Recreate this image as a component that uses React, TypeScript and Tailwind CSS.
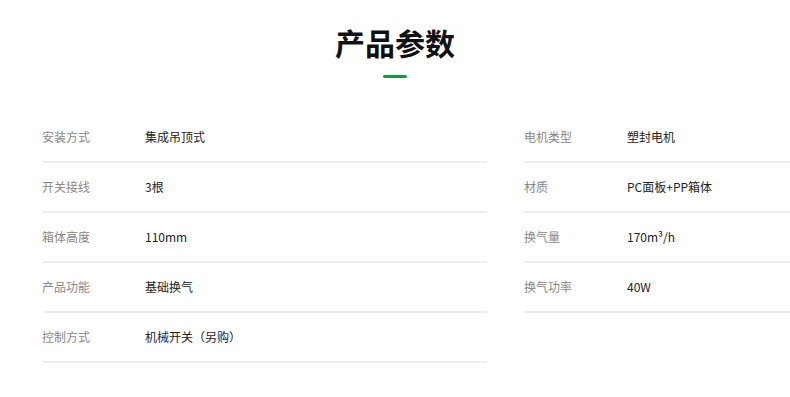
const left = [
  ["安装方式", "集成吊顶式"],
  ["开关接线", "3根"],
  ["箱体高度", "110mm"],
  ["产品功能", "基础换气"],
  ["控制方式", "机械开关（另购）"],
]

const right = [
  ["电机类型", "塑封电机"],
  ["材质", "PC面板+PP箱体"],
  ["换气量", "170m³/h"],
  ["换气功率", "40W"],
]

function SpecRow({ label, value }: { label: string; value: string }) {
  return (
    <div className="flex items-center h-[50px] border-b-2 border-[#eeeeee] text-[12px]">
      <span className="w-[103px] shrink-0 text-[#888888]">{label}</span>
      <span className="text-[#222222]">{value}</span>
    </div>
  )
}

export default function App() {
  return (
    <div
      className="w-[790px] h-[397px] bg-white overflow-hidden"
      style={{ fontFamily: '"Noto Sans CJK SC", "Noto Sans", sans-serif' }}
    >
      {/* 标题 */}
      <div className="flex flex-col items-center pt-[22px]">
        <h1 className="text-[30px] leading-[40px] font-bold text-[#111111]">产品参数</h1>
        <div className="mt-[13px] w-[24px] h-[3px] bg-[#16963f] rounded-full"></div>
      </div>

      {/* 参数表 */}
      <div className="grid grid-cols-[445px_1fr] gap-x-[37px] pl-[42px] mt-[35px]">
        <div>
          {left.map(([l, v]) => (
            <SpecRow key={l} label={l} value={v} />
          ))}
        </div>
        <div>
          {right.map(([l, v]) => (
            <SpecRow key={l} label={l} value={v} />
          ))}
        </div>
      </div>
    </div>
  )
}
